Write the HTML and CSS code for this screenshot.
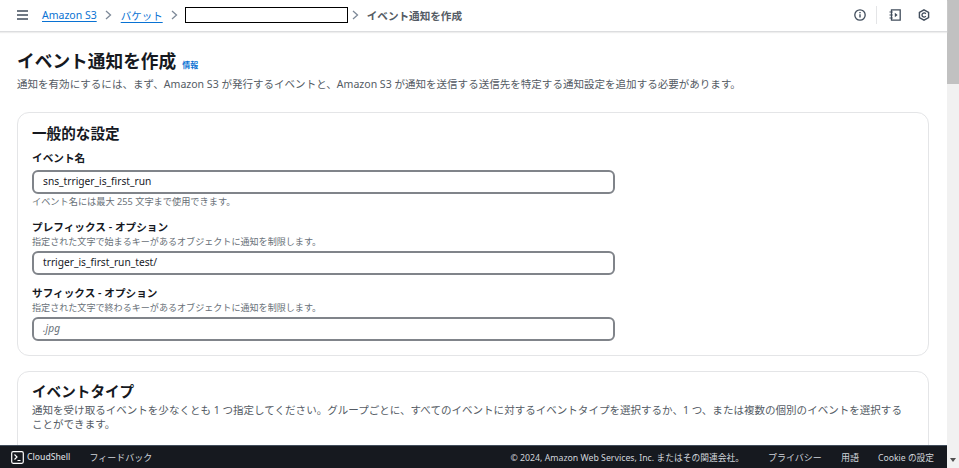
FILE: index.html
```html
<!DOCTYPE html>
<html lang="ja">
<head>
<meta charset="utf-8">
<title>イベント通知を作成</title>
<link rel="stylesheet" href="styles.css">
</head>
<body>
<div class="app">
  <div class="main">
    <header class="topbar">
      <svg class="menu" width="11" height="10" viewBox="0 0 11 10"><path d="M0 1h11M0 5h11M0 9h11" stroke="#414d5c" stroke-width="1.6" fill="none"/></svg>
      <nav class="crumbs">
        <a class="link">Amazon S3</a>
        <svg class="chev" width="7" height="10" viewBox="0 0 7 10"><path d="M1 1l4.500 4L1 9" stroke="#7d8998" stroke-width="1.3" fill="none"/></svg>
        <a class="link">バケット</a>
        <svg class="chev" width="7" height="10" viewBox="0 0 7 10"><path d="M1 1l4.500 4L1 9" stroke="#7d8998" stroke-width="1.3" fill="none"/></svg>
        <span class="redact"></span>
        <svg class="chev" width="7" height="10" viewBox="0 0 7 10"><path d="M1 1l4.500 4L1 9" stroke="#7d8998" stroke-width="1.3" fill="none"/></svg>
        <span class="current">イベント通知を作成</span>
      </nav>
      <div class="tools">
        <svg width="12" height="12" viewBox="0 0 12 12"><circle cx="6" cy="6" r="5.200" fill="none" stroke="#414d5c" stroke-width="1.300"/><path d="M6 5.200v3.400M6 3v1.300" stroke="#414d5c" stroke-width="1.400"/></svg>
        <span class="sep"></span>
        <svg width="12" height="12" viewBox="0 0 12 12"><path d="M2.500 .8h8.700v10.400H2.500z" fill="none" stroke="#414d5c" stroke-width="1.300"/><path d="M.5 3h3.200M.5 6h3.200M.5 9h3.200" stroke="#414d5c" stroke-width="1.100"/><path d="M5.800 3.800L8.600 6 5.800 8.200z" fill="#414d5c"/></svg>
        <svg class="hex" width="12" height="12" viewBox="0 0 12 12"><path d="M6 .8l4.600 2.600v5.200L6 11.200 1.400 8.600V3.400z" fill="none" stroke="#414d5c" stroke-width="1.400"/><path d="M7.800 4.800A2.100 2.100 0 1 0 7.800 7.200" fill="none" stroke="#414d5c" stroke-width="1.300"/></svg>
      </div>
    </header>
    <main class="content">
      <div class="title-row">
        <h1>イベント通知を作成</h1>
        <a class="info">情報</a>
      </div>
      <p class="desc">通知を有効にするには、まず、Amazon S3 が発行するイベントと、Amazon S3 が通知を送信する送信先を特定する通知設定を追加する必要があります。</p>
      <section class="card">
        <h2>一般的な設定</h2>
        <div class="field first">
          <label>イベント名</label>
          <div class="input">sns_trriger_is_first_run</div>
          <small class="hint">イベント名には最大 255 文字まで使用できます。</small>
        </div>
        <div class="field">
          <label>プレフィックス - オプション</label>
          <small class="sub">指定された文字で始まるキーがあるオブジェクトに通知を制限します。</small>
          <div class="input">trriger_is_first_run_test/</div>
        </div>
        <div class="field">
          <label>サフィックス - オプション</label>
          <small class="sub">指定された文字で終わるキーがあるオブジェクトに通知を制限します。</small>
          <div class="input placeholder">.jpg</div>
        </div>
      </section>
      <section class="card second">
        <h2>イベントタイプ</h2>
        <p class="card-desc">通知を受け取るイベントを少なくとも 1 つ指定してください。グループごとに、すべてのイベントに対するイベントタイプを選択するか、1 つ、または複数の個別のイベントを選択することができます。</p>
      </section>
    </main>
    <footer class="footer">
      <svg width="13" height="13" viewBox="0 0 13 13"><rect x=".7" y=".7" width="11.600" height="11.600" rx="1.500" fill="none" stroke="#fff" stroke-width="1.200"/><path d="M3.500 3.500L6 6 3.500 8.500M6.500 9.500h3" fill="none" stroke="#fff" stroke-width="1.200"/></svg>
      <span class="cs">CloudShell</span>
      <span class="fb">フィードバック</span>
      <span class="copy">© 2024, Amazon Web Services, Inc. またはその関連会社。</span>
      <span class="fl">プライバシー</span>
      <span class="fl">用語</span>
      <span class="fl">Cookie の設定</span>
    </footer>
  </div>
  <div class="scrollbar">
    <div class="thumb"></div>
    <div class="arrow"></div>
  </div>
</div>
</body>
</html>
```
FILE: styles.css
```css
* { box-sizing: border-box; }
html, body { margin: 0; height: 100%; overflow: hidden; }
body { font-family: "Noto Sans", "Noto Sans CJK JP", sans-serif; color: #16191f; background: #fff; }
.app { display: flex; height: 468px; }
.main { width: 947px; display: flex; flex-direction: column; }
.topbar { height: 32px; flex: none; display: flex; align-items: center; padding: 0 17px 1px 17px; border-bottom: 1px solid #dcdddf; box-shadow: 0 1px 1px #eee; position: relative; z-index: 1; }
.menu { margin-right: 14px; }
.crumbs { display: flex; align-items: center; font-size: 10.500px; }
.link { color: #0972d3; text-decoration: underline; text-underline-offset: 2px; }
.chev { margin: 0 9px 0 8px; }
.redact { width: 163px; height: 16px; border: 1px solid #000; margin-left: -2px; margin-right: -4px; }
.current { color: #545b64; font-weight: 600; font-size: 10.600px; margin-left: -1px; }
.tools { margin-left: auto; display: flex; align-items: center; }
.sep { width: 1px; height: 18px; background: #e4e5e7; margin: 0 12px 0 10px; }
.hex { margin-left: 17px; }
.content { flex: 1; overflow: hidden; padding: 0 18px 0 17px; }
.title-row { display: flex; align-items: baseline; margin-top: 15px; height: 28px; }
h1 { margin: 0; font-size: 17.700px; font-weight: 700; line-height: 28px; color: #16191f; }
.info { color: #0972d3; font-size: 8px; font-weight: 700; margin-left: 6px; }
.desc { margin: 1px 0 0; font-size: 10.540px; line-height: 17px; color: #545b64; white-space: nowrap; }
.card { margin-top: 19px; border: 1px solid #e4e5e7; border-radius: 12px; padding: 9px 14px 0; height: 244px; }
.card.second { margin-top: 15px; height: 100px; padding-top: 8px; }
h2 { margin: 0; font-size: 14.600px; font-weight: 700; line-height: 22px; }
.field { display: flex; flex-direction: column; }
.field.first { margin-top: 8px; }
.field + .field { margin-top: 12px; }
label { font-size: 10.650px; font-weight: 600; line-height: 13px; color: #16191f; }
.input { width: 583px; height: 24px; margin-top: 5px; border: 2px solid #80848a; border-radius: 6px; padding: 0 9px; font-size: 10.200px; line-height: 19px; color: #16191f; }
.placeholder { font-style: italic; color: #687078; }
.hint { font-size: 9.200px; line-height: 14px; margin-top: 1px; color: #687078; }
.sub { font-size: 9.070px; line-height: 11px; margin-top: 2px; color: #687078; }
.sub + .input { margin-top: 4px; }
.card-desc { margin: 1px 0 0; max-width: 875px; font-size: 10.540px; line-height: 14px; color: #545b64; }
.footer { height: 23px; flex: none; background: #16191f; color: #d1d5db; display: flex; align-items: center; padding: 0 13px 0 11px; font-size: 9px; border-top: 1px solid #414d5c; }
.cs { margin-left: 3px; font-weight: 500; font-size: 8.600px; color: #d1d5db; }
.fb { margin-left: 19px; }
.copy { margin-left: auto; margin-right: 24px; font-size: 8.770px; }
.fl { margin-left: 19px; }
.fl:last-child { font-size: 8.700px; }
.copy + .fl { margin-left: 0; }
.scrollbar { width: 12px; background: #f1f1f1; position: relative; display: flex; flex-direction: column; justify-content: space-between; }
.thumb { height: 84px; background: #c1c1c1; }
.arrow { width: 0; height: 0; margin: 0 auto 6px; border: 3px solid transparent; border-top: 4px solid #505050; border-bottom: 0; }
```
